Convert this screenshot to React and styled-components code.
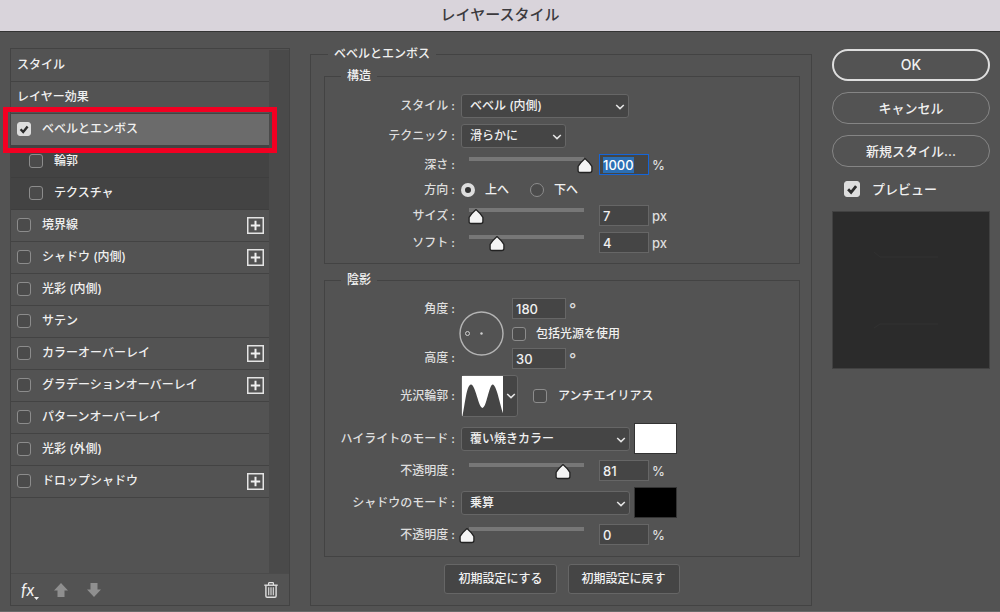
import React, { useEffect, useRef } from "react";
import styled, { createGlobalStyle, css } from "styled-components";

const color = {
  surface: "#535353",
  sunken: "#454545",
  line: "#434343",
  edge: "#666666",
  text: "#f0f0f0",
  label: "#dedede",
  light: "#dddddd",
  accent: "#1565d8",
};

const svgUrl = (body, w, h) =>
  `url("data:image/svg+xml,${encodeURIComponent(
    `<svg xmlns='http://www.w3.org/2000/svg' width='${w}' height='${h}' viewBox='0 0 ${w} ${h}'>${body}</svg>`
  )}")`;

const tick = svgUrl(
  "<path d='M3.6 7.2 6.2 10 10.6 4.4' fill='none' stroke='#2c2c2c' stroke-width='2.4'/>",
  14,
  14
);
const thumb = svgUrl(
  "<path d='M8 4.6 Q12 8 14.9 12.4 V16.4 Q14.9 18.500 12.8 18.500 H3.200 Q1.100 18.500 1.100 16.400 V12.400 Q4 8 8 4.600 Z' fill='#f4f4f4' stroke='#222' stroke-width='1.3' stroke-linejoin='round'/>",
  16,
  21
);

const Global = createGlobalStyle`
  *, *::before, *::after { box-sizing: border-box; }
  body {
    margin: 0;
    background: ${color.surface};
    color: ${color.text};
    font: 500 12px/16px Inter, "Noto Sans CJK JP", sans-serif;
  }
  button, input, select { font: inherit; color: inherit; }
`;

const Dialog = styled.main`
  display: flex;
  flex-direction: column;
  min-height: 100vh;
  border-bottom: 1px solid #6a6a6a;
`;

const TitleBar = styled.h1`
  margin: 0;
  padding: 3px 0 4px;
  border-bottom: 1px solid #333;
  background: #d9d4db;
  color: #3c3a3e;
  font-size: 15px;
  font-weight: 500;
  line-height: 24px;
  text-align: center;
`;

const Body = styled.div`
  flex: 1;
  display: grid;
  grid-template-columns: 280px minmax(0, 1fr) 158px;
  column-gap: 20px;
  padding: 14px 10px 5px;
`;

/* ---- Effects list ---- */

const Sidebar = styled.nav`
  display: flex;
  flex-direction: column;
  margin-top: 2px;
  border: 1px solid ${color.line};
`;

const ListArea = styled.div`
  flex: 1;
  display: flex;
  padding-top: 1px;
  border-bottom: 1px solid #4b4b4b;
`;

const EffectList = styled.ul`
  flex: 1;
  margin: 0;
  padding: 0;
  list-style: none;
`;

const ScrollTrack = styled.div`
  width: 20px;
  background: #4a4a4a;
`;

const EffectRow = styled.li`
  position: relative;
  display: flex;
  align-items: center;
  height: 32px;
  padding: 0 5px 1px ${(p) => (p.$kind === "sub" ? 18 : 6)}px;
  border-bottom: 1px solid ${(p) => (p.$kind === "sub" ? "#3e3e3e" : color.line)};
  background: ${(p) =>
    p.$selected ? "#6b6b6b" : p.$kind === "sub" ? "#434343" : color.surface};
`;

const Callout = styled.span`
  position: absolute;
  z-index: 1;
  inset: -7px -8px -8px;
  border: 5px solid #f20022;
  pointer-events: none;
`;

const CheckLabel = styled.label`
  display: flex;
  align-items: center;
  gap: ${(p) => p.$gap || 11}px;
`;

const CheckBox = styled.input.attrs({ type: "checkbox" })`
  appearance: none;
  flex: none;
  width: ${(p) => p.$size || 14}px;
  height: ${(p) => p.$size || 14}px;
  margin: 0;
  border: 1px solid #8c8c8c;
  border-radius: 3px;
  background: #4b4b4b;
  &:checked {
    border-color: ${color.light};
    background: ${color.light} ${tick} center / 100% no-repeat;
    background-origin: border-box;
  }
`;

const AddButton = styled.button`
  display: grid;
  place-items: center;
  width: 17px;
  height: 17px;
  margin-left: auto;
  padding: 0;
  border: 0;
  background: none;
`;

const Toolbar = styled.div`
  display: flex;
  align-items: center;
  height: 31px;
  padding: 0 8px 0 10px;
`;

const ToolButton = styled.button`
  display: grid;
  place-items: center;
  width: 20px;
  height: 20px;
  margin-right: ${(p) => p.$after || 0}px;
  margin-left: ${(p) => (p.$end ? "auto" : 0)};
  padding: 0;
  border: 0;
  background: none;
`;

const FxButton = styled(ToolButton)`
  display: flex;
  align-items: flex-end;
  font: italic 400 17px/20px Lato, sans-serif;
`;

/* ---- Settings ---- */

const Group = styled.fieldset`
  min-width: 0;
  margin: 0;
  border: 1px solid ${color.line};
`;

const Legend = styled.legend`
  margin-left: 16px;
  padding: 0 6px;
`;

const Panel = styled(Group)`
  padding: 6px 11px 11px 13px;
  & > ${Legend} {
    margin-left: 4px;
  }
`;

const Section = styled(Group)`
  padding: 10px 0;
  & + & {
    margin-top: 8px;
    padding-bottom: 11px;
  }
`;

const Rows = styled.div`
  display: flex;
  flex-direction: column;
  gap: 6px;
`;

const Row = styled.div`
  display: grid;
  grid-template-columns: 130px minmax(0, 1fr);
  column-gap: 6px;
  min-height: 18px;
`;

const labelText = css`
  color: ${color.label};
  text-align: right;
`;

const RowLabel = styled.label`
  ${labelText}
  align-self: center;
`;

const LabelStack = styled.div`
  ${labelText}
  display: flex;
  flex-direction: column;
  justify-content: space-between;
  padding: 3px 0;
`;

const Controls = styled.div`
  display: flex;
  align-items: center;
`;

const SelectBox = styled.span`
  position: relative;
  width: ${(p) => p.$width}px;
  svg {
    position: absolute;
    top: 10px;
    right: 4px;
    pointer-events: none;
  }
`;

const Select = styled.select`
  appearance: none;
  display: block;
  width: 100%;
  height: 24px;
  padding: 0 20px 0 8px;
  border: 1px solid ${color.edge};
  border-radius: 3px;
  background: ${color.sunken};
`;

const Slider = styled.input.attrs({ type: "range" })`
  appearance: none;
  width: 134px;
  height: 21px;
  margin: 0 6px 0 -2px;
  background: linear-gradient(#777, #777) 10px 3px / 115px 4px no-repeat;
  &::-webkit-slider-thumb {
    appearance: none;
    width: 16px;
    height: 21px;
    background: ${thumb} no-repeat;
  }
`;

const NumberBox = styled.input.attrs({ type: "text", inputMode: "numeric" })`
  width: ${(p) => p.$width || 50}px;
  height: 21px;
  padding: 0 3px;
  border: 1px solid ${color.edge};
  background: ${color.sunken};
  font-size: 13px;
  outline: 0;
  &:focus {
    border-color: ${color.accent};
  }
  &::selection {
    background: #2c6fb4;
    color: #fff;
  }
`;

const Unit = styled.span`
  margin-left: 3px;
  color: ${color.label};
  font-size: ${(p) => (p.$degree ? 16 : 13)}px;
`;

const RadioLabel = styled.label`
  display: flex;
  align-items: center;
  gap: 10px;
  margin-right: 21px;
`;

const Radio = styled.input.attrs({ type: "radio" })`
  appearance: none;
  width: 14px;
  height: 14px;
  margin: 0;
  border: 1px solid #8c8c8c;
  border-radius: 50%;
  background: #4b4b4b;
  &:checked {
    border: 4px solid ${color.light};
    background: #333;
  }
`;

const Dial = styled.svg`
  flex: none;
  margin: 0 8px 0 -2px;
`;

const AngleFields = styled.div`
  display: grid;
  grid-template-rows: 21px 17px 21px;
  row-gap: 6px;
`;

const ContourButton = styled.button`
  display: flex;
  align-items: center;
  width: 57px;
  height: 42px;
  margin-right: 15px;
  padding: 0;
  border: 1px solid ${color.edge};
  border-radius: 3px;
  background: ${color.sunken};
  svg + svg {
    margin-left: 3px;
  }
`;

const Swatch = styled.button`
  width: 43px;
  height: 31px;
  margin-left: 4px;
  padding: 0;
  border: 1px solid #333;
  background: ${(p) => p.$color};
`;

const Actions = styled.div`
  display: flex;
  justify-content: center;
  gap: 11px;
  margin-top: 7px;
`;

const ActionButton = styled.button`
  height: 30px;
  padding: 0 13px;
  border: 1px solid ${color.edge};
  border-radius: 3px;
  background: ${color.sunken};
`;

/* ---- Dialog buttons and preview ---- */

const Aside = styled.aside`
  display: flex;
  flex-direction: column;
  padding-top: 3px;
  font-size: 13px;
`;

const PillButton = styled.button`
  height: 32px;
  margin-bottom: 11px;
  border: ${(p) => (p.$primary ? "2px solid #dedede" : "1px solid #858585")};
  border-radius: 16px;
  background: none;
  font-size: ${(p) => (p.$primary ? 14 : 13)}px;
`;

const PreviewToggle = styled.div`
  margin: 3px 0 14px 12px;
`;

const Preview = styled.div`
  aspect-ratio: 1;
  border: 1px solid #414141;
  background: #2b2b2b;
  svg {
    display: block;
    width: 100%;
  }
`;

function Chevron() {
  return (
    <svg width="10" height="6" viewBox="0 0 10 6" aria-hidden="true">
      <path d="M1.2 1 5 4.6 8.8 1" fill="none" stroke="#e6e6e6" strokeWidth="1.5" />
    </svg>
  );
}

function Dropdown({ id, width, children }) {
  return (
    <SelectBox $width={width}>
      <Select id={id}>
        <option>{children}</option>
      </Select>
      <Chevron />
    </SelectBox>
  );
}

function SliderRow({ id, label, value, max, unit, inputRef }) {
  return (
    <Row>
      <RowLabel htmlFor={id}>{label} :</RowLabel>
      <Controls>
        <Slider aria-label={label} min="0" max={max} defaultValue={value} />
        <NumberBox id={id} ref={inputRef} defaultValue={value} />
        <Unit>{unit}</Unit>
      </Controls>
    </Row>
  );
}

const effects = [
  { name: "ベベルとエンボス", selected: true },
  { name: "輪郭", kind: "sub" },
  { name: "テクスチャ", kind: "sub" },
  { name: "境界線", add: true },
  { name: "シャドウ (内側)", add: true },
  { name: "光彩 (内側)" },
  { name: "サテン" },
  { name: "カラーオーバーレイ", add: true },
  { name: "グラデーションオーバーレイ", add: true },
  { name: "パターンオーバーレイ" },
  { name: "光彩 (外側)" },
  { name: "ドロップシャドウ", add: true },
];

function EffectsPanel() {
  return (
    <Sidebar>
      <ListArea>
        <EffectList>
          <EffectRow>スタイル</EffectRow>
          <EffectRow>レイヤー効果</EffectRow>
          {effects.map((e) => (
            <EffectRow key={e.name} $kind={e.kind} $selected={e.selected}>
              <CheckLabel>
                <CheckBox defaultChecked={e.selected} />
                {e.name}
              </CheckLabel>
              {e.add && (
                <AddButton aria-label={`${e.name}を追加`}>
                  <svg width="17" height="17" viewBox="0 0 17 17">
                    <rect x=".75" y=".75" width="15.5" height="15.5" fill="none" stroke="#e4e4e4" strokeWidth="1.5" />
                    <path d="M8.5 3.8v9.4M3.8 8.5h9.4" stroke="#f0f0f0" strokeWidth="2" />
                  </svg>
                </AddButton>
              )}
              {e.selected && <Callout />}
            </EffectRow>
          ))}
        </EffectList>
        <ScrollTrack />
      </ListArea>
      <Toolbar>
        <FxButton $after={10}>
          fx
          <svg width="5" height="3" viewBox="0 0 5 3" aria-hidden="true">
            <path d="M0 0h5L2.5 3z" fill="#f0f0f0" />
          </svg>
        </FxButton>
        <ToolButton $after={13} aria-label="上へ移動">
          <svg width="14" height="14" viewBox="0 0 14 14">
            <path d="M7 0 14 7.5H10.5V14H3.5V7.5H0Z" fill="#8f8f8f" />
          </svg>
        </ToolButton>
        <ToolButton aria-label="下へ移動">
          <svg width="14" height="14" viewBox="0 0 14 14">
            <path d="M7 14 0 6.5H3.5V0h7v6.5H14Z" fill="#8f8f8f" />
          </svg>
        </ToolButton>
        <ToolButton $end aria-label="削除">
          <svg width="14" height="16" viewBox="0 0 14 16" fill="none" stroke="#e0e0e0">
            <path d="M.3 3.2h13.4" strokeWidth="1.4" />
            <path d="M4.6 3V1.2Q4.6.7 5.1.7h3.8q.5 0 .5.5V3" strokeWidth="1.2" />
            <path d="M1.9 3.5V14q0 1.2 1.2 1.2h7.8q1.2 0 1.2-1.2V3.5" strokeWidth="1.4" />
            <path d="M4.7 5.3v8M7 5.3v8M9.3 5.3v8" strokeWidth="1.1" />
          </svg>
        </ToolButton>
      </Toolbar>
    </Sidebar>
  );
}

function SettingsPanel() {
  const depth = useRef(null);
  useEffect(() => {
    depth.current.focus();
    depth.current.select();
  }, []);

  return (
    <Panel>
      <Legend>ベベルとエンボス</Legend>
      <Section>
        <Legend>構造</Legend>
        <Rows>
          <Row>
            <RowLabel htmlFor="style">スタイル :</RowLabel>
            <Controls>
              <Dropdown id="style" width={168}>ベベル (内側)</Dropdown>
            </Controls>
          </Row>
          <Row>
            <RowLabel htmlFor="technique">テクニック :</RowLabel>
            <Controls>
              <Dropdown id="technique" width={105}>滑らかに</Dropdown>
            </Controls>
          </Row>
          <SliderRow id="depth" label="深さ" value={1000} max={1000} unit="%" inputRef={depth} />
          <Row>
            <RowLabel as="span">方向 :</RowLabel>
            <Controls>
              <RadioLabel>
                <Radio name="direction" defaultChecked />
                上へ
              </RadioLabel>
              <RadioLabel>
                <Radio name="direction" />
                下へ
              </RadioLabel>
            </Controls>
          </Row>
          <SliderRow id="size" label="サイズ" value={7} max={97} unit="px" />
          <SliderRow id="soften" label="ソフト" value={4} max={16} unit="px" />
        </Rows>
      </Section>
      <Section>
        <Legend>陰影</Legend>
        <Rows>
          <Row>
            <LabelStack>
              <label htmlFor="angle">角度 :</label>
              <label htmlFor="altitude">高度 :</label>
            </LabelStack>
            <Controls>
              <Dial width="45" height="45" viewBox="0 0 45 45" fill="none" aria-hidden="true">
                <circle cx="22.5" cy="22.5" r="21.5" stroke="#b4b4b4" strokeWidth="1.4" />
                <circle cx="8.5" cy="22.5" r="2" stroke="#d0d0d0" />
                <circle cx="22.5" cy="22.5" r="1.2" fill="#d0d0d0" />
              </Dial>
              <AngleFields>
                <Controls>
                  <NumberBox id="angle" $width={54} defaultValue="180" />
                  <Unit $degree>°</Unit>
                </Controls>
                <CheckLabel $gap={10}>
                  <CheckBox />
                  包括光源を使用
                </CheckLabel>
                <Controls>
                  <NumberBox id="altitude" $width={54} defaultValue="30" />
                  <Unit $degree>°</Unit>
                </Controls>
              </AngleFields>
            </Controls>
          </Row>
          <Row>
            <RowLabel htmlFor="contour">光沢輪郭 :</RowLabel>
            <Controls>
              <ContourButton id="contour">
                <svg width="41" height="40" viewBox="0 0 41 42" preserveAspectRatio="none">
                  <path d="M0 0h41v42H0z" fill="#fff" />
                  <path
                    d="M.5 42C3 30 4.500 9 9 9s7.500 24.500 11.500 24.500S27 9 30.700 9 38 30 41 39v3Z"
                    fill="#454545"
                  />
                </svg>
                <Chevron />
              </ContourButton>
              <CheckLabel>
                <CheckBox />
                アンチエイリアス
              </CheckLabel>
            </Controls>
          </Row>
          <Row>
            <RowLabel htmlFor="highlight">ハイライトのモード :</RowLabel>
            <Controls>
              <Dropdown id="highlight" width={169}>覆い焼きカラー</Dropdown>
              <Swatch $color="#fff" aria-label="ハイライトのカラー" />
            </Controls>
          </Row>
          <SliderRow id="highlight-opacity" label="不透明度" value={81} max={100} unit="%" />
          <Row>
            <RowLabel htmlFor="shadow">シャドウのモード :</RowLabel>
            <Controls>
              <Dropdown id="shadow" width={169}>乗算</Dropdown>
              <Swatch $color="#000" aria-label="シャドウのカラー" />
            </Controls>
          </Row>
          <SliderRow id="shadow-opacity" label="不透明度" value={0} max={100} unit="%" />
        </Rows>
      </Section>
      <Actions>
        <ActionButton>初期設定にする</ActionButton>
        <ActionButton>初期設定に戻す</ActionButton>
      </Actions>
    </Panel>
  );
}

export default function App() {
  return (
    <Dialog>
      <Global />
      <TitleBar>レイヤースタイル</TitleBar>
      <Body>
        <EffectsPanel />
        <SettingsPanel />
        <Aside>
          <PillButton $primary>OK</PillButton>
          <PillButton>キャンセル</PillButton>
          <PillButton>新規スタイル...</PillButton>
          <PreviewToggle>
            <CheckLabel $gap={12}>
              <CheckBox $size={16} defaultChecked />
              プレビュー
            </CheckLabel>
          </PreviewToggle>
          <Preview>
            <svg viewBox="0 0 156 156" fill="none" stroke="#323232" aria-hidden="true">
              <path d="M41 40l6 5h58M41 116l6-4h58" />
            </svg>
          </Preview>
        </Aside>
      </Body>
    </Dialog>
  );
}
